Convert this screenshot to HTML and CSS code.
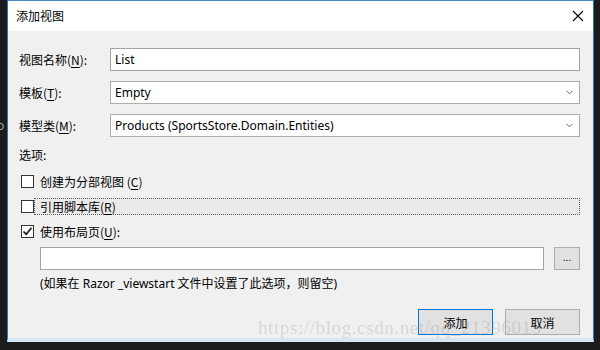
FILE: index.html
```html
<!DOCTYPE html>
<html lang="zh-CN">
<head>
<meta charset="utf-8">
<title>添加视图</title>
<link rel="stylesheet" href="styles.css">
</head>
<body>
<div class="desk">
  <span class="edge-o">o</span>
  <div class="dialog">
    <div class="titlebar">
      <span class="title">添加视图</span>
      <svg class="close" width="12" height="12" viewBox="0 0 12 12"><path d="M1 1 L11 11 M11 1 L1 11" stroke="#000" stroke-width="1.1" fill="none"/></svg>
    </div>
    <div class="content">
      <div class="form">
        <label class="lbl">视图名称(<u>N</u>):</label>
        <div class="field"><span>List</span></div>
        <label class="lbl">模板(<u>T</u>):</label>
        <div class="field select"><span>Empty</span><svg class="chev" width="7" height="5" viewBox="0 0 7 5"><path d="M0.5 0.8 L3.5 3.8 L6.5 0.8" stroke="#666" stroke-width="1" fill="none"/></svg></div>
        <label class="lbl">模型类(<u>M</u>):</label>
        <div class="field select"><span>Products (SportsStore.Domain.Entities)</span><svg class="chev" width="7" height="5" viewBox="0 0 7 5"><path d="M0.5 0.8 L3.5 3.8 L6.5 0.8" stroke="#666" stroke-width="1" fill="none"/></svg></div>
      </div>
      <div class="section">选项:</div>
      <div class="check-row">
        <span class="box"></span>
        <span class="ctext">创建为分部视图 (<u>C</u>)</span>
      </div>
      <div class="check-row">
        <span class="box"></span>
        <span class="ctext focus">引用脚本库(<u>R</u>)</span>
      </div>
      <div class="check-row">
        <span class="box"><svg width="11" height="11" viewBox="0 0 11 11"><path d="M1.5 5.5 L4.2 8.3 L9.5 1.8" stroke="#111" stroke-width="1.6" fill="none"/></svg></span>
        <span class="ctext">使用布局页(<u>U</u>):</span>
      </div>
      <div class="layout-row">
        <div class="field grow"></div>
        <div class="btn small">...</div>
      </div>
      <div class="hint">(如果在 Razor _viewstart 文件中设置了此选项，则留空)</div>
      <div class="actions">
        <div class="btn primary">添加</div>
        <div class="btn">取消</div>
      </div>
    </div>
    <div class="watermark">https://blog.csdn.net/qq_21396015</div>
  </div>
</div>
</body>
</html>
```

FILE: styles.css
```css
html, body {
  margin: 0;
  padding: 0;
  background: #1c1c1e;
  width: 600px;
  height: 350px;
  overflow: hidden;
  font-family: "Noto Sans", "Noto Sans CJK SC", sans-serif;
  font-size: 12px;
  color: #000;
}
.desk {
  position: relative;
  height: 350px;
  padding-left: 7px;
}
.edge-o {
  position: absolute;
  left: -3px;
  top: 117px;
  color: #9aa;
  font-size: 12px;
}
.dialog {
  position: relative;
  width: 585px;
  height: 337px;
  border: 1px solid #2f74b5;
  border-top-color: #4a88c7;
  border-bottom: 4px solid #d6e6f4;
  background: #f0f0f0;
  display: flex;
  flex-direction: column;
  overflow: hidden;
}
.titlebar {
  height: 30px;
  background: #fff;
  display: flex;
  align-items: center;
  justify-content: space-between;
  padding: 0 9px 0 8px;
  flex-shrink: 0;
}
.title {
  font-family: "Noto Sans CJK SC", sans-serif;
  font-size: 12px;
  line-height: 16px;
  margin-top: -1px;
}
.close {
  margin-top: -1px;
}
.content {
  padding: 17px 13px 0 11px;
  display: flex;
  flex-direction: column;
}
.form {
  display: grid;
  grid-template-columns: 91px 1fr;
  row-gap: 10px;
  align-items: center;
}
.lbl {
  font-family: "Noto Sans CJK SC", sans-serif;
  line-height: 16px;
}
.lbl u, .ctext u {
  text-underline-offset: 2px;
}
.field {
  height: 23px;
  box-sizing: border-box;
  border: 1px solid #a3a3a3;
  background: #fff;
  display: flex;
  align-items: center;
  padding: 0 4px;
  line-height: 16px;
}
.field.select {
  justify-content: space-between;
  border-color: #acacac;
  padding-right: 6px;
}
.chev {
  display: block;
}
.section {
  font-family: "Noto Sans CJK SC", sans-serif;
  line-height: 16px;
  margin-top: 10px;
  margin-bottom: 6px;
}
.check-row {
  height: 25px;
  display: flex;
  align-items: center;
  padding-left: 2px;
}
.box {
  width: 13px;
  height: 13px;
  box-sizing: border-box;
  border: 1px solid #333;
  background: #fff;
  display: flex;
  align-items: center;
  justify-content: center;
  flex-shrink: 0;
}
.box svg {
  display: block;
}
.ctext {
  font-family: "Noto Sans CJK SC", sans-serif;
  line-height: 15px;
  padding-left: 6px;
  margin-left: 0;
}
.ctext.focus {
  flex: 1;
  border: 1px dotted #555;
  padding-left: 5px;
  margin-left: 0;
  background: repeating-conic-gradient(#e4e4e4 0 25%, #f0f0f0 0 50%) 0 0 / 2px 2px;
}
.layout-row {
  display: flex;
  gap: 10px;
  margin-top: 3px;
  padding-left: 21px;
}
.field.grow {
  flex: 1;
}
.btn {
  box-sizing: border-box;
  border: 1px solid #adadad;
  background: #e1e1e1;
  display: flex;
  align-items: center;
  justify-content: center;
  font-family: "Noto Sans CJK SC", sans-serif;
  height: 26px;
  width: 75px;
}
.btn.small {
  width: 26px;
  height: 23px;
  font-size: 10px;
  padding-bottom: 4px;
}
.btn.primary {
  border-color: #0078d7;
}
.hint {
  font-family: "Noto Sans", "Noto Sans CJK SC", sans-serif;
  line-height: 16px;
  padding-left: 21px;
  margin-top: 6px;
}
.actions {
  display: flex;
  justify-content: flex-end;
  gap: 12px;
  margin-top: 17px;
}
.watermark {
  position: absolute;
  left: 250px;
  top: 316px;
  font-family: "Liberation Serif", serif;
  font-size: 19px;
  letter-spacing: 0.6px;
  color: rgba(120, 120, 120, 0.22);
  white-space: nowrap;
  pointer-events: none;
}
```
